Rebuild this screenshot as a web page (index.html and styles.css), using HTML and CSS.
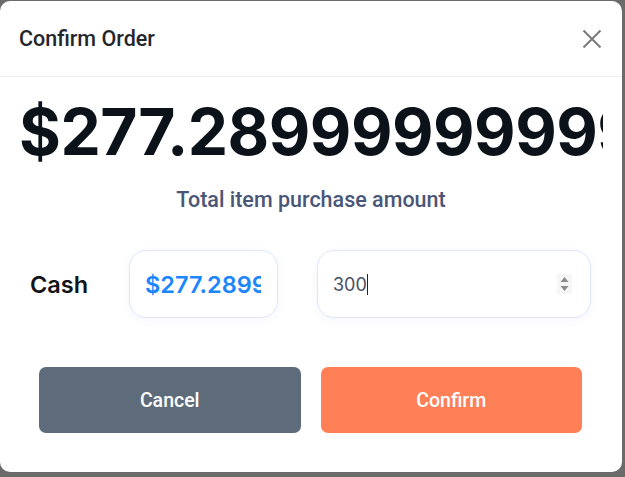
FILE: index.html
```html
<!DOCTYPE html>
<html>
<head>
<meta charset="utf-8">
<link rel="stylesheet" href="styles.css">
</head>
<body>
<div class="modal">
  <div class="modal-header">
    <div class="title">Confirm Order</div>
    <svg class="close" width="20" height="20" viewBox="0 0 20 20"><path d="M1.5 1.5 L18.5 18.5 M18.5 1.5 L1.5 18.5" stroke="#7a7a7a" stroke-width="2" fill="none"/></svg>
  </div>
  <div class="modal-body">
    <div class="amount">$277.28999999999998</div>
    <div class="caption">Total item purchase amount</div>
    <div class="cash-row">
      <div class="cash-label">Cash</div>
      <div class="field field-total"><span class="total-val">$277.28999999999998</span></div>
      <div class="field field-input">
        <span class="typed">300</span><span class="caret"></span>
        <span class="spacer"></span>
        <svg class="spin" width="15" height="20" viewBox="0 0 15 20"><rect width="15" height="20" fill="#f6f6f6"/><path d="M3.5 8 L7.5 3 L11.5 8 Z M3.5 12 L11.5 12 L7.5 17 Z" fill="#8a8a8a"/></svg>
      </div>
    </div>
    <div class="actions">
      <button class="btn btn-cancel">Cancel</button>
      <button class="btn btn-confirm">Confirm</button>
    </div>
  </div>
</div>
</body>
</html>
```
FILE: styles.css
```css
html, body {
  margin: 0;
  padding: 0;
  background: #6b6b6b;
  width: 625px;
  height: 477px;
  overflow: hidden;
}
.modal {
  width: 622px;
  height: 471px;
  margin-top: 1px;
  background: #fff;
  border-radius: 10px;
  box-sizing: border-box;
  overflow: hidden;
}
.modal-header {
  height: 76px;
  box-sizing: border-box;
  border-bottom: 1px solid #eceef2;
  display: flex;
  align-items: center;
  padding: 0 20px 0 19px;
}
.title {
  flex: 1;
  font-family: Roboto, "Liberation Sans", sans-serif;
  font-weight: 500;
  font-size: 21.5px;
  color: #23262b;
  margin-top: -1px;
}
.close { display: block; margin-top: 0px; }
.modal-body {
  padding: 0 19px;
}
.amount {
  font-family: Inter, "Liberation Sans", sans-serif;
  font-weight: 700;
  font-size: 64px;
  line-height: 80px;
  margin-top: 15px;
  color: #0c121a;
  white-space: nowrap;
  overflow: hidden;
  letter-spacing: -0.5px;
}
.caption {
  text-align: center;
  font-family: Roboto, "Liberation Sans", sans-serif;
  font-weight: 500;
  font-size: 21.5px;
  color: #4a5677;
  margin-top: 17px;
  line-height: 22px;
}
.cash-row {
  display: flex;
  align-items: center;
  margin-top: 39px;
  padding-left: 11px;
  padding-right: 12px;
}
.cash-label {
  font-family: Inter, "Liberation Sans", sans-serif;
  font-weight: 600;
  font-size: 23.5px;
  color: #121417;
  width: 99px;
}
.field {
  height: 68px;
  box-sizing: border-box;
  border: 1px solid #dfe6fb;
  border-radius: 17px;
  background: #fff;
  box-shadow: 0 2px 10px rgba(120, 140, 220, 0.08);
  display: flex;
  align-items: center;
  overflow: hidden;
}
.field-total {
  width: 149px;
  padding: 0 16px 0 15px;
  margin-right: 39px;
}
.total-val {
  font-family: Inter, "Liberation Sans", sans-serif;
  font-weight: 600;
  font-size: 23.5px;
  color: #1c86fb;
  white-space: nowrap;
  overflow: hidden;
  display: block;
  width: 100%;
}
.field-input {
  flex: 1;
  padding: 0 18px 0 15px;
}
.typed {
  font-family: Inter, "Liberation Sans", sans-serif;
  font-size: 18px;
  color: #4a4f63;
}
.caret {
  display: inline-block;
  width: 1px;
  height: 21px;
  background: #222;
}
.spacer { flex: 1; }
.spin { display: block; }
.actions {
  display: flex;
  gap: 20px;
  margin-top: 49px;
  padding: 0 21px 0 20px;
}
.btn {
  flex: 1;
  height: 66px;
  border: none;
  border-radius: 7px;
  font-family: Roboto, "Liberation Sans", sans-serif;
  font-weight: 500;
  font-size: 19.5px;
  color: #fff;
}
.btn-cancel { background: #5d6b7b; }
.btn-confirm { background: #ff7f57; }
```
